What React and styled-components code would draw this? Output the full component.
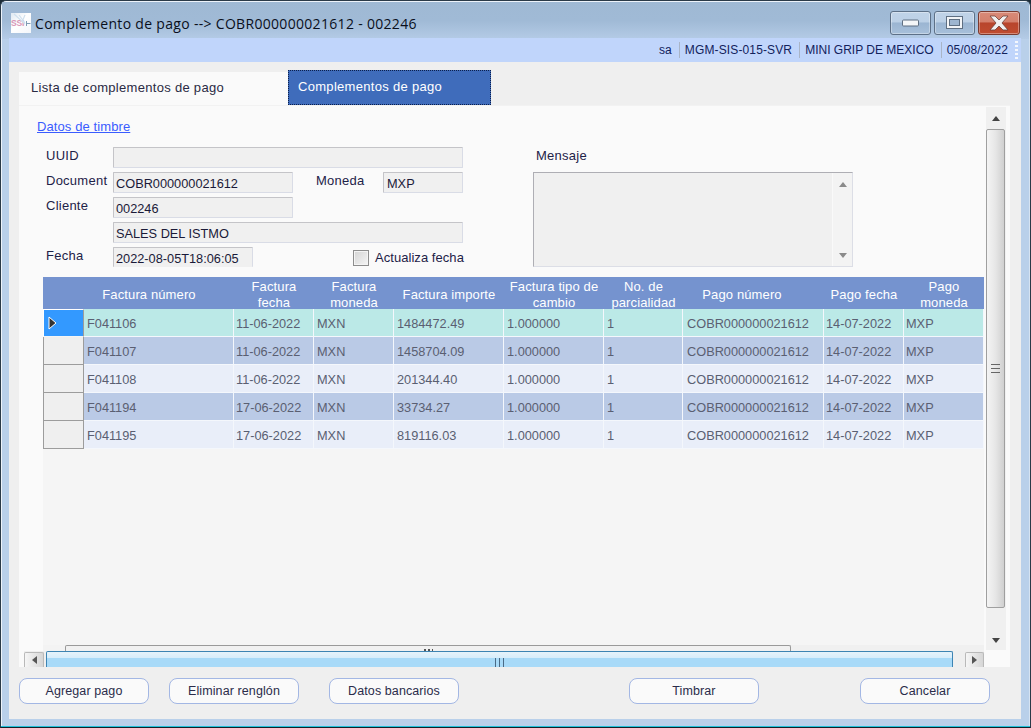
import React from "react";
import styled, { createGlobalStyle } from "styled-components";

const Global = createGlobalStyle`
  html, body { margin: 0; padding: 0; background: #1c2b36; }
  #root { width: 1031px; height: 728px; overflow: hidden; }
  * { box-sizing: border-box; }
`;

const Frame = styled.div`
  width: 1031px; height: 728px; display: flex; flex-direction: column;
  background: #b9d0ea; border: 1px solid #2a3a48; border-bottom: 1px solid #10202a; border-radius: 6px 6px 0 0;
  box-shadow: inset 0 -1px 0 #1fc0d8, inset 1px 1px 0 rgba(255,255,255,.75), inset -1px 0 0 rgba(255,255,255,.4);
  font-family: "Liberation Sans", Arial, sans-serif; font-size: 13px; color: #1a1a40; overflow: hidden;
`;
const TitleBar = styled.div`
  height: 37px; flex: none; display: flex; align-items: flex-start; padding: 9px 9px 0 10px;
  background: linear-gradient(#9fb9d4 0%, #a0bad6 50%, #b4cbe6 100%);
  margin: 1px 1px -1px;
`;
const AppIcon = styled.div`
  position: relative; width: 20px; height: 20px; margin: 2px 4px 0 -1px; flex: none;
  background: linear-gradient(135deg, #dfe9f2 0%, #ffffff 45%, #f3f6fa 100%);
  display: flex; align-items: center; overflow: hidden;
`;
const IconMark = styled.span`
  font-size: 8.5px; font-weight: bold; line-height: 1; color: #d996b6; letter-spacing: -.2px;
`;
const IconTick = styled.svg` position: absolute; left: 0; top: 0; `;
const Title = styled.div`
  font-family: "Open Sans", sans-serif; font-size: 14px; line-height: 20px; margin-top: 3px; color: #0a0f1c; flex: 1; white-space: nowrap; letter-spacing: .31px;
`;
const Controls = styled.div` display: flex; gap: 3px; `;
const Ctl = styled.div`
  width: ${p => p.$w}px; height: 24px; border: 1px solid ${p => p.$close ? "#7a3a30" : "#5d7087"}; border-radius: 3px;
  display: flex; align-items: center; justify-content: center;
  background: ${p => p.$close
    ? "linear-gradient(#d98a78 0%, #d4806c 45%, #b8452c 50%, #c04c30 100%)"
    : "linear-gradient(#c0d3e8 0%, #bcd0e6 45%, #9bb5d2 50%, #a8c0da 100%)"};
  box-shadow: inset 0 0 0 1px rgba(255,255,255,.35);
`;
const StatusBar = styled.div`
  height: 24px; flex: none; margin: 0 9px 0 8px; background: #c0d5fb; display: flex; align-items: center; justify-content: flex-end; padding-right: 3px;
`;
const StatusItem = styled.div`
  height: 16px; line-height: 16px; padding: 0 ${p => p.$last ? 1 : 7}px 0 5px; color: #12225c; white-space: nowrap; font-size: 12px;
  letter-spacing: ${p => p.$ls ?? 0.13}px;
  border-right: ${p => p.$last ? "none" : "1px solid #a9b5c7"};
`;
const Grip = styled.div`
  width: 3px; height: 18px; margin-left: 6px;
  background: repeating-linear-gradient(#f4f7fd 0 2px, transparent 2px 4px);
`;
const Client = styled.div`
  flex: 1; min-height: 0; margin: 0 9px 8px 8px; background: #efefef; display: flex; flex-direction: column; padding: 8px 11px 0 10px;
`;
const Tabs = styled.div` height: 35px; flex: none; display: flex; align-items: flex-end; `;
const Tab = styled.div`
  height: ${p => p.$active ? 35 : 33}px; width: ${p => p.$active ? 203 : 269}px; display: flex; align-items: center;
  padding-left: ${p => p.$active ? 9 : 12}px; font-size: 13px; letter-spacing: .3px;
  background: ${p => p.$active ? "#3f6cbb" : "#fafafa"}; color: ${p => p.$active ? "#fff" : "#2a2a44"};
  border: ${p => p.$active ? "1px dotted #0b1f4d" : "none"};
  padding-bottom: 2px;
`;
const Panel = styled.div`
  height: 562px; flex: none; background: #fafafa; display: flex; flex-direction: column; border-top: 1px solid #f2f2f2;
`;
const PanelMain = styled.div` flex: 1; min-height: 0; display: flex; `;
const Scroller = styled.div` flex: 1; min-width: 0; display: flex; flex-direction: column; `;
const LinkRow = styled.div` height: 41px; flex: none; padding: 13px 0 0 18px; `;
const Link = styled.a`
  font-size: 13px; letter-spacing: .1px; color: #3a5cff; text-decoration: underline;
`;
const FormRow = styled.div` height: 130px; flex: none; display: flex; padding-left: 27px; `;
const FormGrid = styled.div`
  display: grid; grid-template-columns: 67px 180px 23px 67px 80px; grid-auto-rows: 25px;
`;
const Label = styled.div` font-size: 13px; letter-spacing: .25px; padding-top: 1px; color: #1e2248; grid-column: ${p => p.$col || "auto"}; white-space: nowrap; `;
const Field = styled.div`
  height: ${p => p.$h || 21}px; width: ${p => p.$w ? `${p.$w}px` : "auto"}; grid-column: ${p => p.$col || "auto"}; background: #f0f0f0; padding: 4px 0 0 ${p => p.$pad || 2}px;
  border: 1px solid #d9dce6; border-top-color: #c4c4c8; border-left-color: #c4c4c8; border-radius: 1px;
  ${p => p.$open && "border-bottom: none;"}
  font-size: 12.75px; line-height: 14px; color: #1a1a38; white-space: nowrap; overflow: hidden;
`;
const CheckWrap = styled.div`
  grid-column: 4 / 6; display: flex; align-items: center; gap: 6px; height: 21px; margin-left: 37px; font-size: 13px; letter-spacing: .05px; color: #1e2248; white-space: nowrap;
`;
const CheckBox = styled.div`
  width: 16px; height: 16px; flex: none; border: 1px solid #8d8d8d; background: linear-gradient(135deg, #d4d4d4, #f5f5f5); box-shadow: inset 0 0 0 1px #f4f4f4;
`;
const MsgCol = styled.div` margin-left: 70px; width: 320px; display: flex; flex-direction: column; `;
const MsgLabel = styled.div` height: 25px; padding: 1px 0 0 3px; letter-spacing: .25px; color: #1e2248; `;
const MsgBox = styled.div`
  height: 95px; display: flex; background: #f0f0f0; border: 1px solid #dcdee6; border-top-color: #aeaeb4; border-left-color: #aeaeb4;
`;
const MsgText = styled.div` flex: 1; `;
const MsgBar = styled.div`
  width: 20px; background: #f3f3f3; border-left: 1px solid #f9f9f9; display: flex; flex-direction: column; align-items: center; justify-content: space-between; padding: 9px 0 8px;
`;
const Arrow = styled.div`
  width: 0; height: 0; border-style: solid; border-color: transparent;
  ${p => p.$dir === "up" && `border-width: 0 4px 5px; border-bottom-color: ${p.$c || "#8a8a8a"};`}
  ${p => p.$dir === "down" && `border-width: 5px 4px 0; border-top-color: ${p.$c || "#8a8a8a"};`}
  ${p => p.$dir === "left" && `border-width: 4px 5px 4px 0; border-right-color: ${p.$c || "#555"};`}
  ${p => p.$dir === "right" && `border-width: 4px 0 4px 5px; border-left-color: ${p.$c || "#555"};`}
`;
const COLS = "41px 150px 80px 80px 110px 100px 79px 141px 80px 80px";
const GridArea = styled.div`
  margin-left: 24px; width: 941px; flex: 1; min-height: 0; background: #f5f5f5; display: flex; flex-direction: column;
`;
const HeadRow = styled.div`
  height: 32px; flex: none; display: grid; grid-template-columns: ${COLS}; background: #7593cf;
`;
const HeadCell = styled.div`
  color: #fff; font-size: 13px; line-height: 16px; letter-spacing: .12px; text-align: center; display: flex; align-items: center; justify-content: center; padding-top: 2px; padding-right: ${p => p.$shift || 0}px; white-space: pre-line;
`;
const Row = styled.div`
  height: 28px; flex: none; display: grid; grid-template-columns: ${COLS};
`;
const RowHead = styled.div`
  background: ${p => p.$sel ? "#3399ff" : "#efefef"};
  border-left: 1px solid #9c9c9c; border-right: 1px solid #9c9c9c;
  border-bottom: 1px solid ${p => p.$sel ? "#f4f4f4" : "#9c9c9c"};
  ${p => p.$sel && "border-top: 1px solid #fff; border-left-color: #fff;"}
  display: flex; align-items: center; padding-left: 4px;
`;
const Cell = styled.div`
  background: ${p => p.$bg}; border-right: 1px solid #f4f7fc; border-bottom: 1px solid #f4f7fc;
  color: #5a5f72; font-size: 12.75px; padding: 2px 0 0 ${p => p.$pad || 3}px; display: flex; align-items: center; white-space: nowrap;
`;
const GridFill = styled.div` flex: 1; `;
const InnerH = styled.div`
  height: 6px; flex: none; display: flex; background: #f0f0f0; overflow: hidden;
`;
const InnerGap = styled.div` width: 22px; background: #f3f3f3; `;
const InnerThumb = styled.div`
  width: 726px; border: 1px solid #9a9a9a; border-bottom: none; border-radius: 2px 2px 0 0; background: #f1f1f1; display: flex; justify-content: center; padding-top: 3px;
`;
const Dots = styled.div` width: 9px; height: 2px; background: repeating-linear-gradient(90deg, #555 0 2px, transparent 2px 4px); `;
const VBar = styled.div`
  width: 20px; flex: none; margin-top: 1px; background: #f0f0f0; display: flex; flex-direction: column; height: 543px;
`;
const VEnd = styled.div` height: ${p => p.$h}px; flex: none; display: flex; align-items: center; justify-content: center; `;
const VThumb = styled.div`
  width: 19px; height: 479px; flex: none; border: 1px solid #9f9f9f; border-radius: 2px; display: flex; align-items: center; justify-content: center;
  background: linear-gradient(90deg, #f4f4f4, #e6e6e6 50%, #d0d0d0);
`;
const GripV = styled.div` width: 9px; height: 9px; background: repeating-linear-gradient(#666 0 1px, transparent 1px 4px); `;
const VTrack = styled.div` flex: 1; `;
const RightGutter = styled.div` width: 4px; flex: none; `;
const OuterH = styled.div`
  height: 16px; flex: none; margin: 0 26px 0 5px; display: flex; background: #efefef; overflow: hidden;
`;
const HBtn = styled.div`
  width: ${p => p.$w}px; flex: none; margin-top: 1px; border: 1px solid #b9b9b9; border-bottom: none; border-radius: 2px 2px 0 0; background: linear-gradient(90deg, #f6f6f6, #d6d6d6); display: flex; align-items: center; justify-content: center;
`;
const HThumb = styled.div`
  width: 907px; flex: none; margin-left: 2px; border: 1px solid #3d84b3; border-bottom: none; border-radius: 2px 2px 0 0; display: flex; align-items: center; justify-content: center;
  background: linear-gradient(#e6f3fb 0, #d7edfb 6px, #a8daf8 6px, #a8daf8 100%);
`;
const GripH = styled.div` width: 10px; height: 9px; margin-top: 6px; background: repeating-linear-gradient(90deg, #4a6a86 0 1px, transparent 1px 4px); `;
const HTrack = styled.div` flex: 1; `;
const Actions = styled.div`
  flex: 1; display: flex; align-items: flex-start; padding-top: 11px;
`;
const Btn = styled.div`
  width: 130px; height: 26px; flex: none; margin-left: ${p => p.$ml || 0}px; border: 1px solid #a3b7e4; border-radius: 8px; background: #fafafa;
  display: flex; align-items: center; justify-content: center; font-size: 12.5px; letter-spacing: .1px; color: #2a2c4a;
`;

const rows = [
  ["F041106", "11-06-2022", "1484472.49"],
  ["F041107", "11-06-2022", "1458704.09"],
  ["F041108", "11-06-2022", "201344.40"],
  ["F041194", "17-06-2022", "33734.27"],
  ["F041195", "17-06-2022", "819116.03"],
];
const heads = [
  ["", 0], ["Factura número", 20], ["Factura\nfecha", 0], ["Factura\nmoneda", 0], ["Factura importe", 0],
  ["Factura tipo de\ncambio", 0], ["No. de\nparcialidad", 0], ["Pago número", 23], ["Pago fecha", 0], ["Pago\nmoneda", 0],
];
const bgFor = i => (i === 0 ? "#bbe9e7" : i % 2 ? "#bacae6" : "#e9eef9");

export default function App() {
  return (
    <Frame>
      <Global />
      <TitleBar>
        <AppIcon>
          <IconTick width="20" height="20" viewBox="0 0 20 20">
            <path d="M3 1l11 10M8 2l6 8M14 2l-3 7" stroke="#cfe0ee" strokeWidth="1.2" fill="none" />
            <path d="M15.5 8v5M15.5 10.5h4" stroke="#7f9cb4" strokeWidth="1" fill="none" />
          </IconTick>
          <IconMark>SSI</IconMark>
        </AppIcon>
        <Title>Complemento de pago --&gt; COBR000000021612 - 002246</Title>
        <Controls>
          <Ctl $w={41}><svg width="18" height="8"><rect x="0.5" y="1" width="16" height="6" rx="1" fill="#f4f6f8" stroke="#5f6f82" /></svg></Ctl>
          <Ctl $w={41}><svg width="18" height="14"><rect x="0.5" y="0.5" width="16" height="12" fill="#f2f4f7" stroke="#5f6f82" /><rect x="3.5" y="3.5" width="10" height="6" fill="#9fb6d0" stroke="#5f6f82" /></svg></Ctl>
          <Ctl $w={42} $close><svg width="22" height="16"><path d="M2 1h5l4 4 4-4h5l-6 7 6 7h-5l-4-4-4 4H2l6-7z" fill="#f1f1f1" stroke="#6e4038" strokeWidth=".8" /></svg></Ctl>
        </Controls>
      </TitleBar>
      <StatusBar>
        <StatusItem>sa</StatusItem>
        <StatusItem>MGM-SIS-015-SVR</StatusItem>
        <StatusItem $ls={0}>MINI GRIP DE MEXICO</StatusItem>
        <StatusItem $last>05/08/2022</StatusItem>
        <Grip />
      </StatusBar>
      <Client>
        <Tabs>
          <Tab>Lista de complementos de pago</Tab>
          <Tab $active>Complementos de pago</Tab>
        </Tabs>
        <Panel>
          <PanelMain>
            <Scroller>
              <LinkRow><Link href="#">Datos de timbre</Link></LinkRow>
              <FormRow>
                <FormGrid>
                  <Label>UUID</Label>
                  <Field $col="2 / 6" />
                  <Label>Document</Label>
                  <Field>COBR000000021612</Field>
                  <Label $col="4">Moneda</Label>
                  <Field $pad={3}>MXP</Field>
                  <Label>Cliente</Label>
                  <Field>002246</Field>
                  <Label $col="1"></Label>
                  <Field $col="2 / 6">SALES DEL ISTMO</Field>
                  <Label>Fecha</Label>
                  <Field $h={20} $w={140} $open>2022-08-05T18:06:05</Field>
                  <CheckWrap><CheckBox />Actualiza fecha</CheckWrap>
                </FormGrid>
                <MsgCol>
                  <MsgLabel>Mensaje</MsgLabel>
                  <MsgBox>
                    <MsgText />
                    <MsgBar><Arrow $dir="up" /><Arrow $dir="down" /></MsgBar>
                  </MsgBox>
                </MsgCol>
              </FormRow>
              <GridArea>
                <HeadRow>{heads.map(([h, s], i) => <HeadCell key={i} $shift={s}>{h}</HeadCell>)}</HeadRow>
                {rows.map((r, i) => (
                  <Row key={r[0]}>
                    <RowHead $sel={i === 0}>
                      {i === 0 && <svg width="9" height="14"><path d="M1 1l7 6-7 6z" fill="#333" stroke="#fff" strokeWidth="1" /></svg>}
                    </RowHead>
                    <Cell $bg={bgFor(i)}>{r[0]}</Cell>
                    <Cell $bg={bgFor(i)} $pad={2}>{r[1]}</Cell>
                    <Cell $bg={bgFor(i)}>MXN</Cell>
                    <Cell $bg={bgFor(i)}>{r[2]}</Cell>
                    <Cell $bg={bgFor(i)}>1.000000</Cell>
                    <Cell $bg={bgFor(i)}>1</Cell>
                    <Cell $bg={bgFor(i)} $pad={4}>COBR000000021612</Cell>
                    <Cell $bg={bgFor(i)} $pad={2}>14-07-2022</Cell>
                    <Cell $bg={bgFor(i)} $pad={2}>MXP</Cell>
                  </Row>
                ))}
                <GridFill />
                <InnerH><InnerGap /><InnerThumb><Dots /></InnerThumb></InnerH>
              </GridArea>
            </Scroller>
            <VBar>
              <VEnd $h={22}><Arrow $dir="up" $c="#444" /></VEnd>
              <VThumb><GripV /></VThumb>
              <VTrack />
              <VEnd $h={20}><Arrow $dir="down" $c="#444" /></VEnd>
            </VBar>
            <RightGutter />
          </PanelMain>
          <OuterH>
            <HBtn $w={20}><Arrow $dir="left" /></HBtn>
            <HThumb><GripH /></HThumb>
            <HTrack />
            <HBtn $w={19}><Arrow $dir="right" /></HBtn>
          </OuterH>
        </Panel>
        <Actions>
          <Btn>Agregar pago</Btn>
          <Btn $ml={20}>Eliminar renglón</Btn>
          <Btn $ml={30}>Datos bancarios</Btn>
          <Btn $ml={170}>Timbrar</Btn>
          <Btn $ml={101}>Cancelar</Btn>
        </Actions>
      </Client>
    </Frame>
  );
}
